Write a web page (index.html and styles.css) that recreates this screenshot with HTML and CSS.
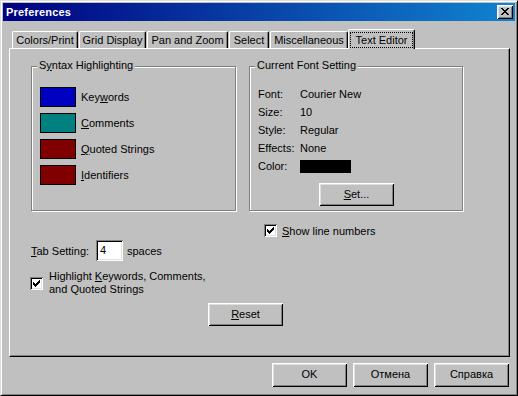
FILE: index.html
```html
<!DOCTYPE html>
<html>
<head>
<meta charset="utf-8">
<title>Preferences</title>
<link rel="stylesheet" href="styles.css">
</head>
<body>
<div class="window">
  <div class="titlebar">
    <span class="title">Preferences</span>
    <div class="close">
      <svg width="8" height="7" viewBox="0 0 8 7" shape-rendering="crispEdges">
        <rect x="0" y="0" width="2" height="1"/><rect x="6" y="0" width="2" height="1"/>
        <rect x="1" y="1" width="2" height="1"/><rect x="5" y="1" width="2" height="1"/>
        <rect x="2" y="2" width="4" height="1"/>
        <rect x="3" y="3" width="2" height="1"/>
        <rect x="2" y="4" width="4" height="1"/>
        <rect x="1" y="5" width="2" height="1"/><rect x="5" y="5" width="2" height="1"/>
        <rect x="0" y="6" width="2" height="1"/><rect x="6" y="6" width="2" height="1"/>
      </svg>
    </div>
  </div>

  <div class="tabs">
    <div class="tab tab-colors">Colors/Print</div>
    <div class="tab tab-grid">Grid Display</div>
    <div class="tab tab-pan">Pan and Zoom</div>
    <div class="tab tab-select">Select</div>
    <div class="tab tab-misc">Miscellaneous</div>
    <div class="tab tab-active"><span class="focus">Text Editor</span></div>
  </div>

  <div class="panel">
    <div class="groups">
      <div class="group group-syntax">
        <span class="group-title">S<u>y</u>ntax Highlighting</span>
        <div class="swatches">
          <div class="swatch-row"><span class="swatch sw-blue"></span><span>Key<u>w</u>ords</span></div>
          <div class="swatch-row"><span class="swatch sw-teal"></span><span><u>C</u>omments</span></div>
          <div class="swatch-row"><span class="swatch sw-red"></span><span><u>Q</u>uoted Strings</span></div>
          <div class="swatch-row"><span class="swatch sw-red"></span><span><u>I</u>dentifiers</span></div>
        </div>
      </div>
      <div class="group group-font">
        <span class="group-title">Current Font Setting</span>
        <div class="font-info">
          <span>Font:</span><span>Courier New</span>
          <span>Size:</span><span>10</span>
          <span>Style:</span><span>Regular</span>
          <span>Effects:</span><span>None</span>
          <span>Color:</span><span class="color-cell"><span class="color-box"></span></span>
        </div>
        <div class="btn btn-set"><u>S</u>et...</div>
      </div>
    </div>

    <div class="show-lines">
      <span class="checkbox">
        <svg width="7" height="7" viewBox="0 0 7 7" shape-rendering="crispEdges">
          <rect x="6" y="0" width="1" height="1"/>
          <rect x="5" y="1" width="2" height="1"/>
          <rect x="0" y="2" width="1" height="1"/><rect x="4" y="2" width="3" height="1"/>
          <rect x="0" y="3" width="2" height="1"/><rect x="3" y="3" width="3" height="1"/>
          <rect x="0" y="4" width="5" height="1"/>
          <rect x="1" y="5" width="3" height="1"/>
          <rect x="2" y="6" width="1" height="1"/>
        </svg>
      </span>
      <span><u>S</u>how line numbers</span>
    </div>

    <div class="tab-setting">
      <span class="tab-label"><u>T</u>ab Setting:</span>
      <span class="field">4</span>
      <span class="spaces">spaces</span>
    </div>

    <div class="highlight">
      <span class="checkbox">
        <svg width="7" height="7" viewBox="0 0 7 7" shape-rendering="crispEdges">
          <rect x="6" y="0" width="1" height="1"/>
          <rect x="5" y="1" width="2" height="1"/>
          <rect x="0" y="2" width="1" height="1"/><rect x="4" y="2" width="3" height="1"/>
          <rect x="0" y="3" width="2" height="1"/><rect x="3" y="3" width="3" height="1"/>
          <rect x="0" y="4" width="5" height="1"/>
          <rect x="1" y="5" width="3" height="1"/>
          <rect x="2" y="6" width="1" height="1"/>
        </svg>
      </span>
      <span class="highlight-text">Highlight <u>K</u>eywords, Comments,<br>and Quoted Strings</span>
    </div>

    <div class="btn btn-reset"><u>R</u>eset</div>
  </div>

  <div class="footer">
    <div class="btn btn-footer">OK</div>
    <div class="btn btn-footer">Отмена</div>
    <div class="btn btn-footer">Справка</div>
  </div>
</div>
</body>
</html>
```

FILE: styles.css
```css
* {
  box-sizing: border-box;
}

html, body {
  margin: 0;
  padding: 0;
}

body {
  width: 518px;
  height: 396px;
  overflow: hidden;
  background: #c0c0c0;
  font-family: "Liberation Sans", Arial, sans-serif;
  font-size: 11px;
  color: #000;
}

u {
  text-decoration: underline;
  text-underline-offset: 1px;
}

.window {
  width: 518px;
  height: 396px;
  background: #c0c0c0;
  border: 1px solid;
  border-color: #dfdfdf #000 #000 #dfdfdf;
  box-shadow: inset 1px 1px #fff, inset -1px -1px #808080;
  padding: 2px;
  display: flex;
  flex-direction: column;
}

/* Title bar */
.titlebar {
  height: 18px;
  flex: none;
  background: linear-gradient(to right, #000080, #1084d0);
  display: flex;
  align-items: center;
  justify-content: space-between;
  padding: 0 2px 0 3px;
}

.title {
  color: #fff;
  font-weight: bold;
  font-size: 11px;
  letter-spacing: 0.2px;
}

.close {
  width: 16px;
  height: 14px;
  background: #c0c0c0;
  box-shadow: inset 1px 1px #fff, inset -1px -1px #000, inset 2px 2px #dfdfdf, inset -2px -2px #808080;
  display: flex;
  align-items: center;
  justify-content: center;
  padding-left: 0;
}

.close svg {
  fill: #000;
  display: block;
  margin-top: -1px;
}

/* Tabs */
.tabs {
  display: flex;
  align-items: flex-end;
  height: 19px;
  flex: none;
  margin-top: 8px;
  padding-left: 9px;
}

.tab {
  height: 17px;
  line-height: 16px;
  text-align: center;
  white-space: nowrap;
  background: #c0c0c0;
  border-top: 1px solid #fff;
  border-left: 1px solid #fff;
  border-right: 1px solid #000;
  box-shadow: inset -1px 0 #808080;
  border-radius: 2px 2px 0 0;
  margin-right: 1px;
}

.tab-colors { width: 66px; }
.tab-grid { width: 67px; }
.tab-pan { width: 81px; }
.tab-select { width: 40px; }
.tab-misc { width: 78px; }

.tab-active {
  position: relative;
  z-index: 1;
  width: 67px;
  height: 20px;
  margin-left: -1px;
  margin-bottom: -1px;
  padding: 2px 1px 0 1px;
}

.focus {
  display: block;
  height: 16px;
  line-height: 14px;
  border: 1px dotted #000;
}

/* Panel */
.panel {
  flex: none;
  margin-left: 6px;
  width: 501px;
  height: 309px;
  border-top: 1px solid #fff;
  border-left: 1px solid #fff;
  border-right: 1px solid #000;
  border-bottom: 1px solid #000;
  box-shadow: inset -1px -1px #808080;
  padding: 17px 0 0 21px;
}

.groups {
  display: flex;
  gap: 13px;
}

.group {
  position: relative;
  height: 145px;
  border: 1px solid #808080;
  box-shadow: inset 1px 1px #fff, 1px 1px #fff;
}

.group-title {
  position: absolute;
  top: -8px;
  left: 5px;
  padding: 0 2px;
  line-height: 13px;
  background: #c0c0c0;
  white-space: nowrap;
}

.group-syntax {
  width: 205px;
  padding: 20px 0 0 8px;
}

.group-font {
  width: 214px;
  padding: 18px 0 0 8px;
}

.swatches {
  display: flex;
  flex-direction: column;
  gap: 6px;
}

.swatch-row {
  display: flex;
  align-items: center;
  gap: 5px;
  height: 20px;
}

.swatch {
  width: 36px;
  height: 20px;
  border: 1px solid #000;
  flex: none;
}

.sw-blue { background: #0000c0; }
.sw-teal { background: #008080; }
.sw-red { background: #800000; }

.font-info {
  display: grid;
  grid-template-columns: 42px auto;
  line-height: 18px;
}

.color-cell {
  display: flex;
  align-items: center;
}

.color-box {
  display: block;
  width: 51px;
  height: 13px;
  background: #000;
}

/* Buttons */
.btn {
  background: #c0c0c0;
  box-shadow: inset 1px 1px #fff, inset -1px -1px #000, inset 2px 2px #dfdfdf, inset -2px -2px #808080;
  text-align: center;
}

.btn-set {
  width: 75px;
  height: 23px;
  line-height: 22px;
  margin: 8px 0 0 61px;
}

.btn-reset {
  width: 75px;
  height: 23px;
  line-height: 22px;
  margin: 7px 0 0 177px;
}

.btn-footer {
  width: 75px;
  height: 24px;
  line-height: 23px;
}

/* Checkboxes & fields */
.checkbox {
  width: 13px;
  height: 13px;
  flex: none;
  background: #fff;
  box-shadow: inset 1px 1px #808080, inset -1px -1px #fff, inset 2px 2px #000, inset -2px -2px #dfdfdf;
  display: flex;
  align-items: center;
  justify-content: center;
}

.checkbox svg {
  display: block;
  fill: #000;
}

.show-lines {
  display: flex;
  align-items: center;
  gap: 5px;
  height: 13px;
  margin: 13px 0 0 233px;
}

.tab-setting {
  display: flex;
  align-items: center;
  height: 21px;
  margin-top: 3px;
}

.tab-label {
  width: 65px;
}

.field {
  width: 27px;
  height: 21px;
  line-height: 21px;
  padding-left: 4px;
  background: #fff;
  box-shadow: inset 1px 1px #808080, inset -1px -1px #fff, inset 2px 2px #000, inset -2px -2px #dfdfdf;
}

.spaces {
  margin-left: 4px;
}

.highlight {
  display: flex;
  align-items: center;
  gap: 6px;
  margin: 9px 0 0 -1px;
  line-height: 13px;
}

/* Footer */
.footer {
  display: flex;
  justify-content: flex-end;
  gap: 6px;
  margin-top: 6px;
  padding-right: 6px;
}
```
